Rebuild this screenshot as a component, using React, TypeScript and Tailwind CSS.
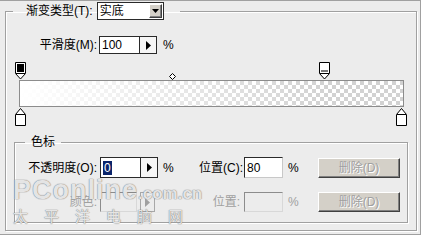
import React from "react"

// Photoshop-style gradient editor panel (opacity stop selected)

const frame = "border border-[#a0a0a0] shadow-[1px_1px_0_#ffffff,inset_1px_1px_0_#ffffff]"
const raised =
  "bg-[#d4d0c8] border border-t-white border-l-white border-r-[#404040] border-b-[#404040] shadow-[inset_-1px_-1px_0_#808080]"

function RightArrow({ disabled = false }: { disabled?: boolean }) {
  return (
    <svg width="5" height="9" viewBox="0 0 5 9">
      <path d="M0 0L5 4.5L0 9Z" fill={disabled ? "#a0a0a0" : "#000"} />
    </svg>
  )
}

function SpinBox({ value, selected = false }: { value: string; selected?: boolean }) {
  return (
    <div className="flex h-full border border-[#2a2a2a] bg-white">
      <div className="flex w-[40px] items-center border-r border-[#2a2a2a] pl-[2px]">
        {selected ? (
          <span className="bg-[#0a246a] px-[1px] leading-[14px] text-white">{value}</span>
        ) : (
          <span>{value}</span>
        )}
      </div>
      <div className="flex flex-1 items-center justify-center bg-[#f6f6f6]">
        <RightArrow />
      </div>
    </div>
  )
}

function TopStop({ dark }: { dark: boolean }) {
  return (
    <svg width="11" height="18" viewBox="0 0 11 18">
      <path d="M0.5 0.5H10.5V11.5L5.5 17L0.5 11.5Z" fill="#fff" stroke="#000" />
      {dark ? (
        <rect x="2" y="2" width="7" height="8" fill="#000" />
      ) : (
        <rect x="2" y="8" width="7" height="2" fill="#7a7a7a" />
      )}
      <line x1="1" y1="11.5" x2="10" y2="11.5" stroke="#000" />
    </svg>
  )
}

function BottomStop() {
  return (
    <svg width="11" height="18" viewBox="0 0 11 18">
      <path d="M5.5 0.5L10.5 6.5V17.5H0.5V6.5Z" fill="#fff" stroke="#000" />
      <line x1="1" y1="6.5" x2="10" y2="6.5" stroke="#000" />
    </svg>
  )
}

function DeleteButton() {
  return (
    <div
      className={`${raised} flex h-[20px] w-[82px] items-center justify-center text-[#a0a0a0] [text-shadow:1px_1px_0_#ffffff]`}
    >
      删除(D)
    </div>
  )
}

export default function App() {
  return (
    <div className="relative h-[235px] w-[421px] overflow-hidden border-t border-r border-b border-[#a0a0a0] bg-[#ececec] pt-[1px] pl-[5px] font-['Liberation_Sans','Noto_Sans_CJK_SC',sans-serif] text-[12px] text-black">
      <fieldset className={`${frame} h-[229px] w-[412px]`}>
        <legend className="ml-[7px] flex h-[18px] items-center pr-[16px] pl-[13px]">
          <span className="mr-[4px]">渐变类型(T):</span>
          <div className="flex h-[18px] w-[67px] items-center border border-[#2a2a2a] bg-white pr-[1px] pl-[2px]">
            <span className="flex-1">实底</span>
            <div className={`${raised} flex h-[14px] w-[13px] items-center justify-center`}>
              <svg width="7" height="4" viewBox="0 0 7 4">
                <path d="M0 0H7L3.5 4Z" fill="#000" />
              </svg>
            </div>
          </div>
        </legend>

        {/* smoothness */}
        <div className="mt-[16px] flex h-[18px] items-center">
          <div className="flex w-[91px] justify-end">平滑度(M):</div>
          <div className="ml-[2px] h-full w-[58px]">
            <SpinBox value="100" />
          </div>
          <span className="ml-[6px]">%</span>
        </div>

        {/* gradient bar with stops */}
        <div className="relative mt-[8px] ml-[13px] h-[63px] w-[385px] pt-[18px]">
          <div className="absolute top-0 left-[-4px]">
            <TopStop dark />
          </div>
          <div className="absolute top-0 left-[300px]">
            <TopStop dark={false} />
          </div>
          <div className="absolute top-[11px] left-[150px]">
            <svg width="7" height="7" viewBox="0 0 7 7">
              <path d="M3.5 0.5L6.5 3.5L3.5 6.5L0.5 3.5Z" fill="#fff" stroke="#000" />
            </svg>
          </div>
          <div className="h-[27px] w-[385px] border border-[#8c8c8c] bg-[conic-gradient(#d2d2d2_25%,#ffffff_0_50%,#d2d2d2_0_75%,#ffffff_0)] bg-size-[8px_8px]">
            <div className="h-full w-full bg-[linear-gradient(to_right,#ffffff,rgba(255,255,255,0)_80%)]" />
          </div>
          <div className="absolute top-[46px] left-[-4px]">
            <BottomStop />
          </div>
          <div className="absolute top-[46px] left-[377px]">
            <BottomStop />
          </div>
        </div>

        {/* color stop group */}
        <fieldset className={`${frame} mt-[9px] ml-[8px] h-[89px] w-[394px]`}>
          <legend className="ml-[10px] px-[6px] leading-[16px]">色标</legend>

          <div className="mt-[7px] flex h-[21px] items-center">
            <div className="flex w-[82px] justify-end">不透明度(O):</div>
            <div className="ml-[3px] h-full w-[58px]">
              <SpinBox value="0" selected />
            </div>
            <span className="w-[17px] pl-[5px]">%</span>
            <div className="flex w-[68px] justify-end">位置(C):</div>
            <div className="ml-[1px] flex h-full w-[39px] items-center border border-t-[#2a2a2a] border-l-[#2a2a2a] border-r-[#c8c8c8] border-b-[#c8c8c8] bg-white pl-[2px]">
              80
            </div>
            <span className="w-[35px] pl-[5px]">%</span>
            <DeleteButton />
          </div>

          <div className="mt-[14px] flex h-[20px] items-center text-[#a0a0a0]">
            <div className="flex w-[82px] justify-end">颜色:</div>
            <div className="ml-[3px] h-full w-[37px] border border-t-[#8c8c8c] border-l-[#8c8c8c] border-r-[#d8d8d8] border-b-[#d8d8d8]" />
            <div className="ml-[3px] flex h-full w-[15px] items-center justify-center border border-[#a8a8a8]">
              <RightArrow disabled />
            </div>
            <div className="flex w-[85px] justify-end">位置:</div>
            <div className="ml-[4px] h-full w-[39px] border border-t-[#8c8c8c] border-l-[#8c8c8c] border-r-[#d8d8d8] border-b-[#d8d8d8]" />
            <span className="w-[35px] pl-[5px]">%</span>
            <DeleteButton />
          </div>
        </fieldset>
      </fieldset>

      {/* watermark */}
      <div className="pointer-events-none absolute top-[176px] left-[13px] flex flex-col text-white/80 [text-shadow:0_0_1px_#7a7a7a,0_0_1px_#7a7a7a]">
        <div className="flex items-baseline font-['Liberation_Sans',sans-serif] leading-none">
          <span className="text-[27px] font-bold tracking-[1px]">PConline</span>
          <span className="text-[17px] font-bold">.com.cn</span>
        </div>
        <div className="mt-[5px] text-[15px] leading-none tracking-[16px]">太平洋电脑网</div>
      </div>
    </div>
  )
}
